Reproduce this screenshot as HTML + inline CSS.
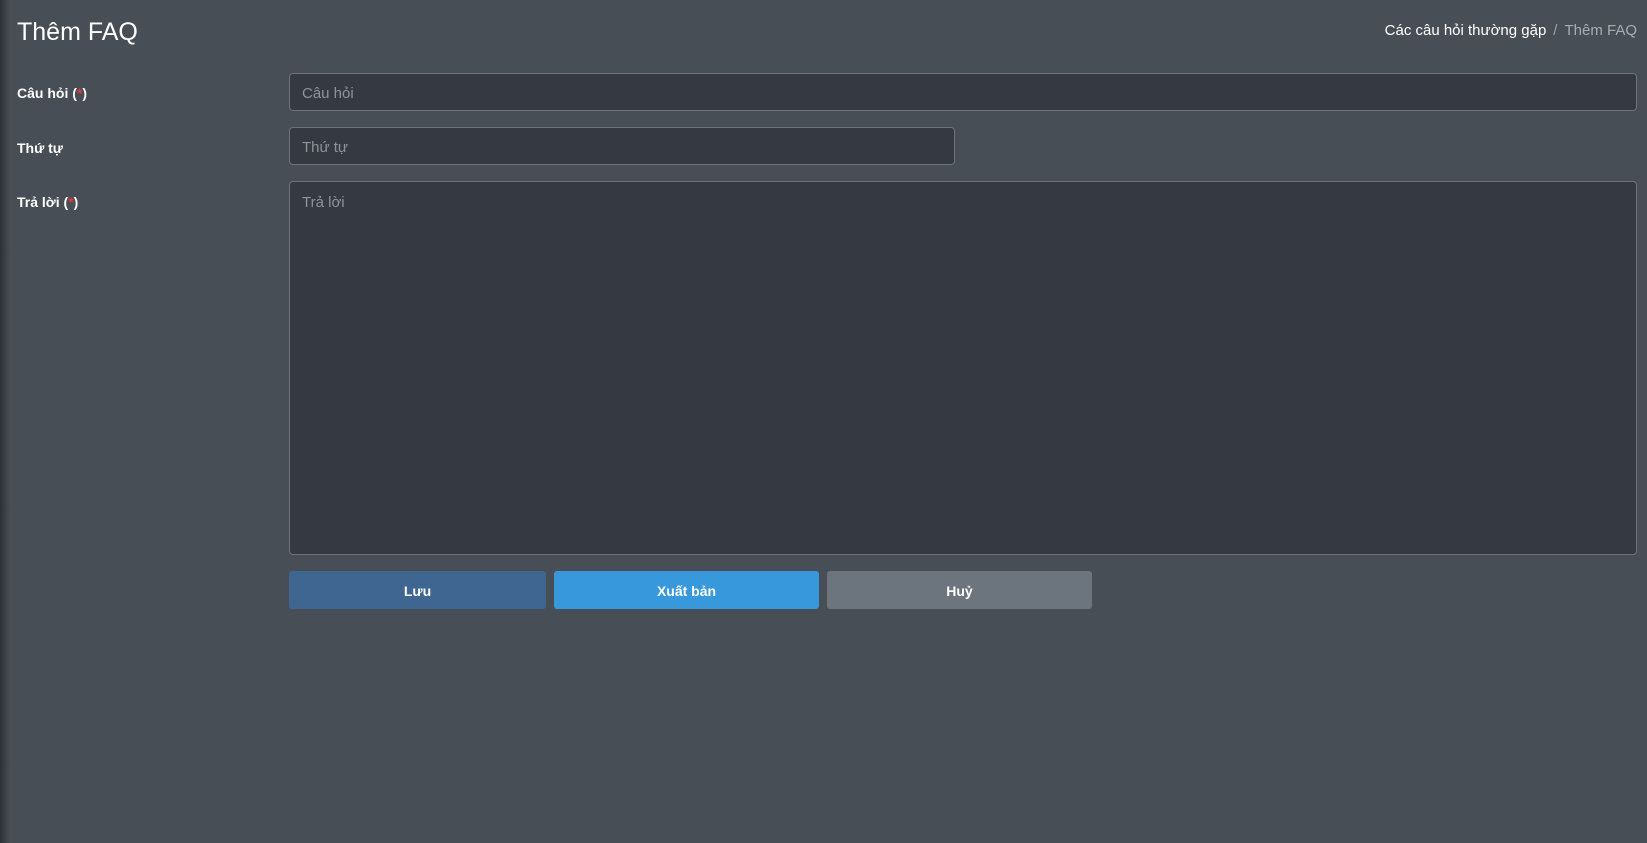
<!DOCTYPE html>
<html><head><meta charset="utf-8"><style>
html,body{margin:0;padding:0}
body{width:1647px;height:843px;background:#474e56;font-family:"Liberation Sans","DejaVu Sans",sans-serif;color:#fff;position:relative;overflow:hidden}
.shadow{position:absolute;left:0;top:0;width:10px;height:843px;background:linear-gradient(to right,#2c3137,#474e56)}
h1{position:absolute;left:17px;top:15px;margin:0;font-weight:normal;font-size:25px;line-height:34px}
.bc{position:absolute;right:10px;top:21px;font-size:15px;line-height:20px}
.bc .s{color:#9aa1a8;margin:0 7px}
.bc .c{color:#a7adb3}
.lbl{position:absolute;left:17px;font-weight:bold;font-size:14px}
.lbl i{color:#e03a3a;font-style:normal}
.in{position:absolute;left:289px;background:#343942;border:1px solid #6c737b;border-radius:4px;box-sizing:border-box;color:#8e949a;font-size:15px;padding-left:12px}
.btn{position:absolute;top:571px;height:38px;line-height:40px;text-align:center;border-radius:3px;font-weight:bold;font-size:14px}
</style></head><body>
<div class="shadow"></div>
<h1>Thêm FAQ</h1>
<div class="bc">Các câu hỏi thường gặp<span class="s">/</span><span class="c">Thêm FAQ</span></div>
<div class="lbl" style="top:85px">Câu hỏi (<i>*</i>)</div>
<div class="lbl" style="top:140px">Thứ tự</div>
<div class="lbl" style="top:194px">Trả lời (<i>*</i>)</div>
<div class="in" style="top:73px;width:1348px;height:38px;line-height:40px">Câu hỏi</div>
<div class="in" style="top:127px;width:666px;height:38px;line-height:40px">Thứ tự</div>
<div class="in" style="top:181px;width:1348px;height:374px;line-height:20px;padding-top:11px">Trả lời</div>
<div class="btn" style="left:289px;width:257px;background:#3f6690">Lưu</div>
<div class="btn" style="left:554px;width:265px;background:#3799db">Xuất bản</div>
<div class="btn" style="left:827px;width:265px;background:#6c747d">Huỷ</div>
</body></html>
